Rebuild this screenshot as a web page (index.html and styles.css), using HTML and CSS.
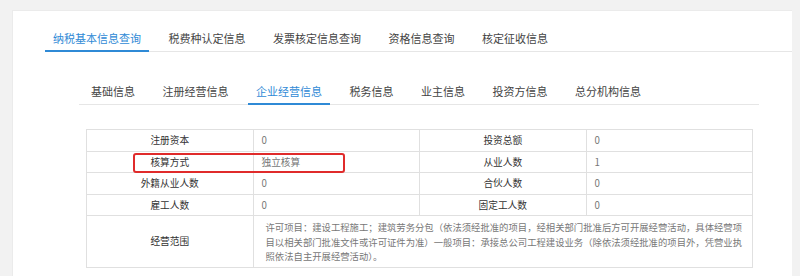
FILE: index.html
```html
<!DOCTYPE html>
<html lang="zh-CN">
<head>
<meta charset="utf-8">
<title>纳税基本信息查询</title>
<link rel="stylesheet" href="styles.css">
</head>
<body>
<div class="card">
  <ul class="tabs main-tabs">
    <li class="tab active">纳税基本信息查询</li>
    <li class="tab">税费种认定信息</li>
    <li class="tab">发票核定信息查询</li>
    <li class="tab">资格信息查询</li>
    <li class="tab">核定征收信息</li>
  </ul>
  <div class="sub">
    <ul class="tabs sub-tabs">
      <li class="tab">基础信息</li>
      <li class="tab">注册经营信息</li>
      <li class="tab active">企业经营信息</li>
      <li class="tab">税务信息</li>
      <li class="tab">业主信息</li>
      <li class="tab">投资方信息</li>
      <li class="tab">总分机构信息</li>
    </ul>
    <div class="table-wrap">
      <table class="info">
        <tr>
          <td class="label">注册资本</td><td class="value">0</td>
          <td class="label">投资总额</td><td class="value">0</td>
        </tr>
        <tr>
          <td class="label">核算方式</td><td class="value">独立核算</td>
          <td class="label">从业人数</td><td class="value">1</td>
        </tr>
        <tr>
          <td class="label">外籍从业人数</td><td class="value">0</td>
          <td class="label">合伙人数</td><td class="value">0</td>
        </tr>
        <tr>
          <td class="label">雇工人数</td><td class="value">0</td>
          <td class="label">固定工人数</td><td class="value">0</td>
        </tr>
        <tr>
          <td class="label">经营范围</td>
          <td class="value scope" colspan="3">许可项目：建设工程施工；建筑劳务分包（依法须经批准的项目，经相关部门批准后方可开展经营活动，具体经营项目以相关部门批准文件或许可证件为准）一般项目：承接总公司工程建设业务（除依法须经批准的项目外，凭营业执照依法自主开展经营活动）。</td>
        </tr>
      </table>
      <div class="highlight"></div>
    </div>
  </div>
</div>
</body>
</html>
```

FILE: styles.css
```css
html, body {
  margin: 0;
  padding: 0;
  overflow: hidden;
}

body {
  background: #f2f2f2;
  font-family: "Noto Sans CJK SC", "Microsoft YaHei", sans-serif;
  color: #444;
}

.card {
  margin: 10px 0 0 12px;
  width: 780px;
  height: 266px;
  background: #ffffff;
  box-sizing: border-box;
  padding: 16px 0 0 32px;
  border-left: 1px solid #ebebeb;
  border-top: 1px solid #ebebeb;
}

.tabs {
  list-style: none;
  margin: 0;
  padding: 0;
  display: flex;
  border-bottom: 1px solid #e6e6e6;
}

.tab {
  font-size: 11px;
  line-height: 23px;
  padding: 0 8px;
  margin-right: 11.5px;
  margin-bottom: -1px;
  border-bottom: 2px solid transparent;
  color: #444;
  white-space: nowrap;
}

.tab.active {
  color: #2f8ad6;
  border-bottom-color: #2f8ad6;
}

.sub {
  margin: 28px 0 0 34px;
  width: 680px;
}

.sub-tabs {
  padding-left: 4px;
}

.table-wrap {
  position: relative;
  margin: 24px 0 0 7px;
  width: 667px;
}

.info {
  width: 667px;
  border-collapse: collapse;
  table-layout: fixed;
  font-size: 9.7px;
}

.info td {
  border: 1px solid #e0e0e0;
  line-height: 20.5px;
  padding: 0;
  white-space: nowrap;
}

.info .label {
  text-align: center;
  color: #333;
}

.info .value {
  text-align: left;
  padding-left: 8px;
  color: #777;
}

.info .value.scope {
  white-space: normal;
  font-size: 9.35px;
  line-height: 14.5px;
  padding: 4px 8px 3px 12px;
}

.highlight {
  position: absolute;
  left: 47px;
  top: 24px;
  width: 212px;
  height: 20px;
  box-sizing: border-box;
  border: 2px solid #e02b2b;
  border-radius: 3px;
}
```
